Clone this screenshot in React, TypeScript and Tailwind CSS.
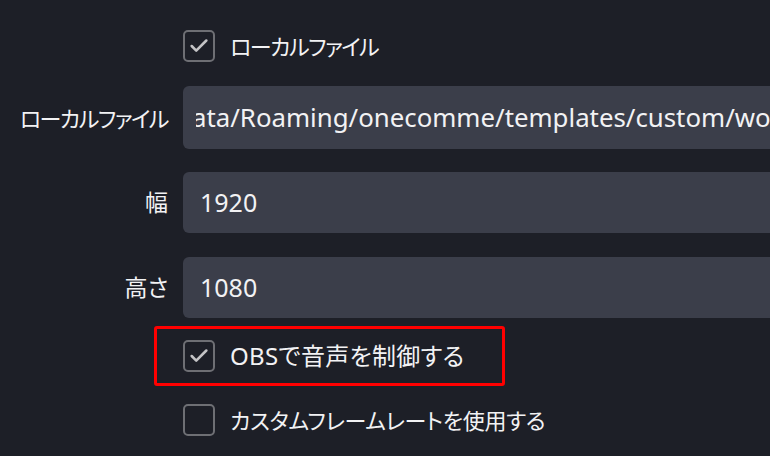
import { Check } from "lucide-react";

const font = "font-['Noto_Sans','Noto_Sans_CJK_JP',sans-serif] [font-feature-settings:'palt']";

function Box({ checked }: { checked?: boolean }) {
  return (
    <div className="flex h-[32px] w-[32px] shrink-0 items-center justify-center rounded-[5px] border-2 border-[#6e6f74]">
      {checked && <Check className="h-[22px] w-[22px] text-[#c4c4c6]" strokeWidth={2.8} />}
    </div>
  );
}

function CheckRow({ label, checked, cls }: { label: string; checked?: boolean; cls: string }) {
  return (
    <div className="flex h-[32px] items-center gap-[15px]">
      <Box checked={checked} />
      <span className={`leading-none whitespace-nowrap text-[#f2f2f4] ${cls}`}>{label}</span>
    </div>
  );
}

function Field({ label, children, h, cls }: { label: string; children: React.ReactNode; h: string; cls: string }) {
  return (
    <div className="flex items-center">
      <div className={`w-[169px] shrink-0 pr-[1px] text-right leading-none whitespace-nowrap text-[#f2f2f4] ${cls}`}>{label}</div>
      <div className={`ml-[14px] flex w-[640px] shrink-0 items-center overflow-hidden rounded-[6px] bg-[#3b3e4a] ${h}`}>
        {children}
      </div>
    </div>
  );
}

export default function App() {
  return (
    <div className={`h-[456px] w-[770px] overflow-hidden bg-[#1d1f27] pt-[30px] ${font}`}>
      <div className="pl-[183px]">
        <CheckRow label="ローカルファイル" checked cls="text-[22px] tracking-[-1.5px]" />
      </div>

      <div className="mt-[24px]">
        <Field label="ローカルファイル" h="h-[63px]" cls="text-[22px] tracking-[-1.5px]">
          <div className="ml-[13px] overflow-hidden">
            <span className="ml-[-4px] block whitespace-nowrap text-[25.8px] text-[#f2f2f4]">
              ata/Roaming/onecomme/templates/custom/wordcloud
            </span>
          </div>
        </Field>
      </div>

      <div className="mt-[23px]">
        <Field label="幅" h="h-[61px]" cls="text-[23px]">
          <span className="pl-[17px] text-[25px] text-[#f2f2f4]">1920</span>
        </Field>
      </div>

      <div className="mt-[24px]">
        <Field label="高さ" h="h-[61px]" cls="text-[23px]">
          <span className="pl-[17px] text-[25px] text-[#f2f2f4]">1080</span>
        </Field>
      </div>

      <div className="ml-[154px] mt-[8px] flex h-[60px] w-[351px] items-center rounded-[3px] border-[3px] border-[#ff0000] pl-[26px]">
        <CheckRow label="OBSで音声を制御する" checked cls="text-[24px] tracking-[0.3px]" />
      </div>

      <div className="mt-[18px] pl-[183px]">
        <CheckRow label="カスタムフレームレートを使用する" cls="text-[22px] tracking-[-0.3px]" />
      </div>
    </div>
  );
}
